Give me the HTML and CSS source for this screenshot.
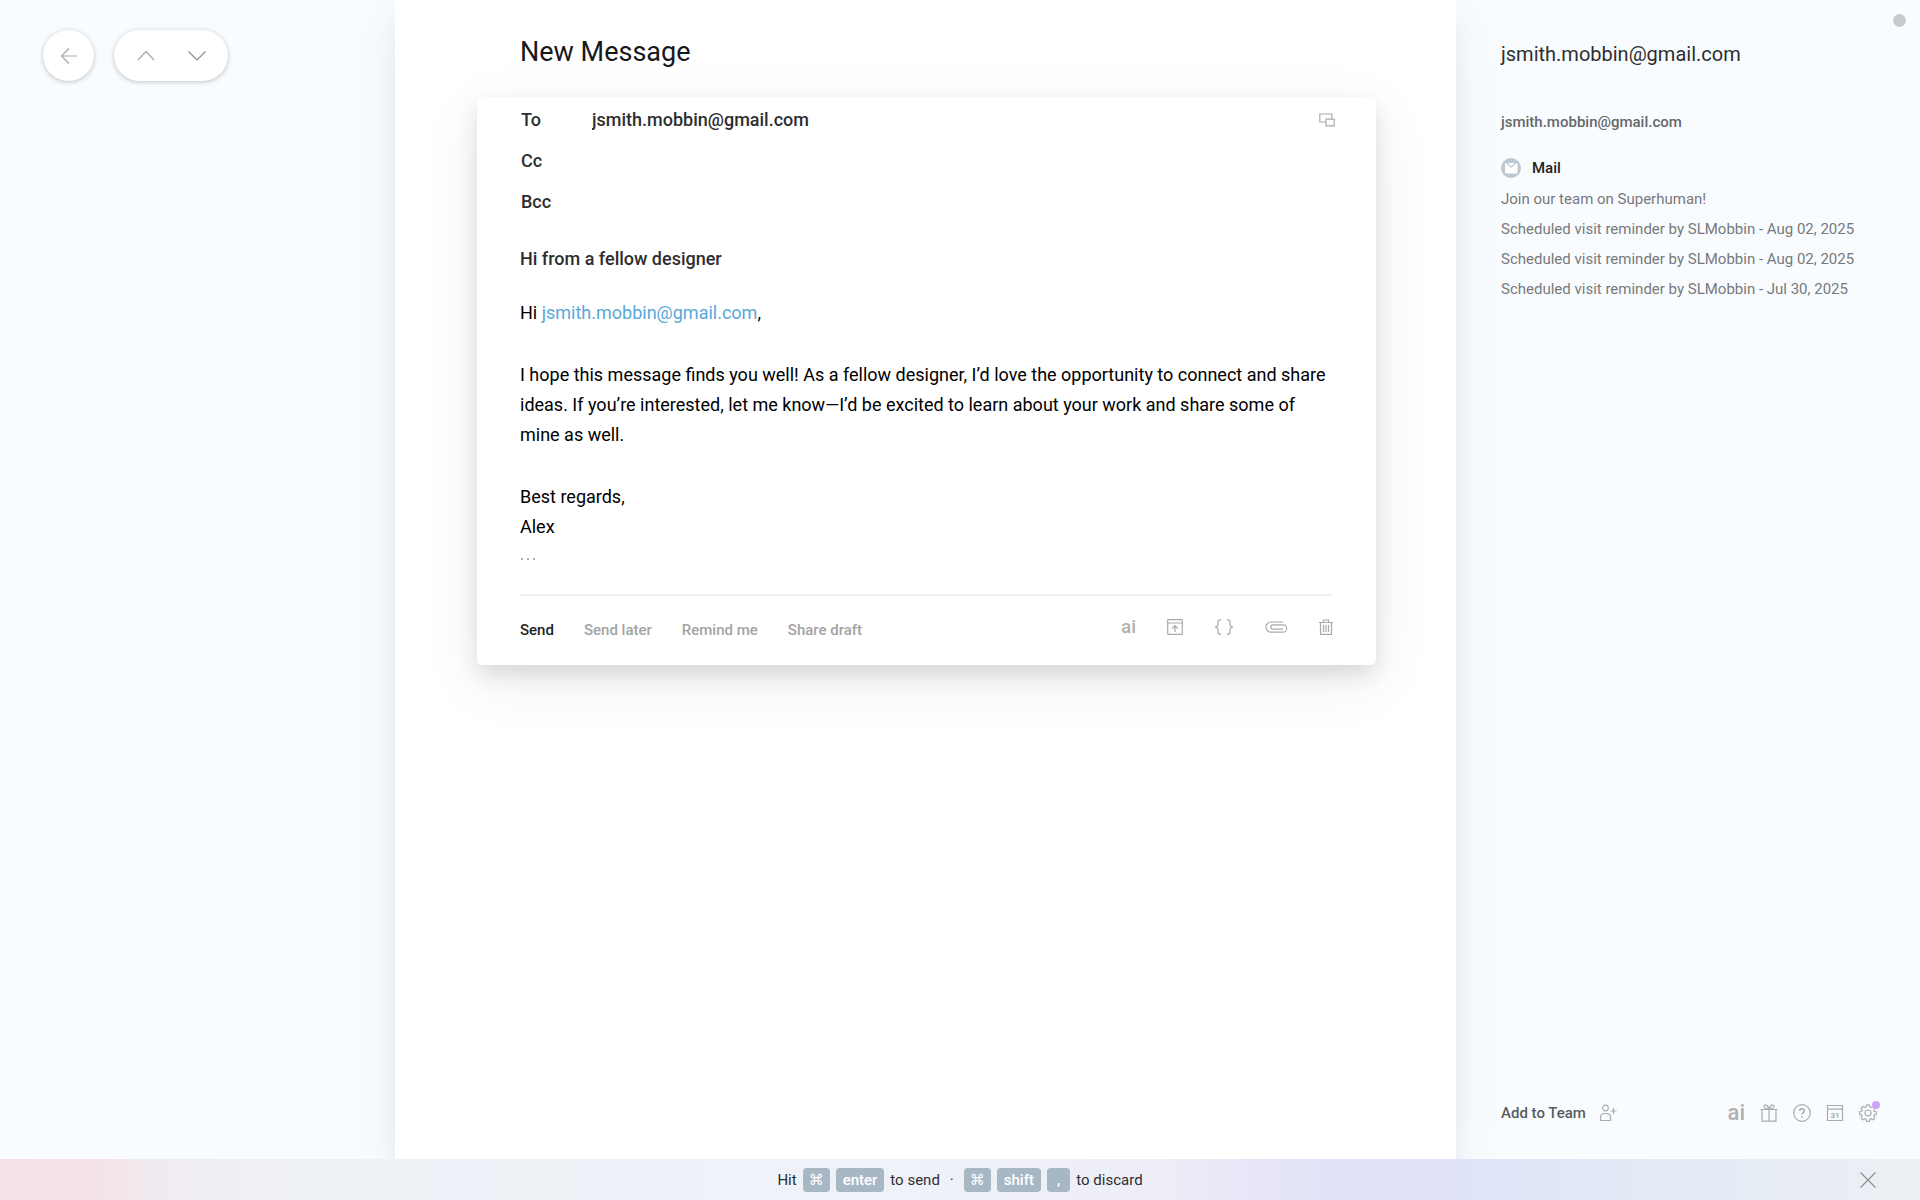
FILE: index.html
```html
<!DOCTYPE html>
<html lang="en">
<head>
  <meta charset="utf-8">
  <meta name="viewport" content="width=device-width, initial-scale=1">
  <title>New Message</title>
  <link rel="stylesheet" href="styles.css">
</head>
<body>
  <div class="workspace">
    <nav class="rail" aria-label="Message navigation">
      <div class="pill">
        <button class="pill-button" type="button" aria-label="Back">
          <svg class="icon" width="18" height="18" viewBox="0 0 18 18"><path d="M17 9H1.500M9 1.500 1.500 9 9 16.500"/></svg>
        </button>
      </div>
      <div class="pill pill-wide">
        <button class="pill-button" type="button" aria-label="Previous">
          <svg class="icon" width="18" height="18" viewBox="0 0 18 18"><path d="M1 13 9 4.500 17 13"/></svg>
        </button>
        <button class="pill-button" type="button" aria-label="Next">
          <svg class="icon icon-strong" width="18" height="18" viewBox="0 0 18 18"><path d="M.500 4.500 9 13 17.500 4.500"/></svg>
        </button>
      </div>
    </nav>

    <main class="page">
      <h1 class="page-title">New Message</h1>
      <form class="composer">
        <div class="recipients">
          <div class="field">
            <label class="field-label" for="to">To</label>
            <input class="field-input" id="to" type="text" value="jsmith.mobbin@gmail.com">
            <button class="icon-button" type="button" aria-label="Pop out">
              <svg class="icon" width="16" height="14" viewBox="0 0 16 14"><path d="M7 9H.800V1h12v5M7 6.200h8.200v6.600H7z"/></svg>
            </button>
          </div>
          <div class="field">
            <label class="field-label" for="cc">Cc</label>
            <input class="field-input" id="cc" type="text">
          </div>
          <div class="field">
            <label class="field-label" for="bcc">Bcc</label>
            <input class="field-input" id="bcc" type="text">
          </div>
        </div>
        <div class="message">
          <input class="subject" type="text" aria-label="Subject" value="Hi from a fellow designer">
          <div class="body" contenteditable="true" role="textbox" aria-multiline="true" aria-label="Message body" spellcheck="false">
            <p>Hi <a class="mention" href="mailto:jsmith.mobbin@gmail.com">jsmith.mobbin@gmail.com</a>,</p>
            <p>I hope this message finds you well! As a fellow designer, I’d love the opportunity to connect and share ideas. If you’re interested, let me know—I’d be excited to learn about your work and share some of mine as well.</p>
            <p>Best regards,<br>Alex</p>
          </div>
          <button class="trim" type="button" aria-label="Show trimmed content"><svg class="dots" width="18" height="4" viewBox="0 0 18 4"><path d="M1 1h2v2H1zM7 1h2v2H7zM13 1h2v2h-2z"/></svg></button>
        </div>
        <div class="actions">
          <button class="action action-primary" type="button">Send</button>
          <button class="action" type="button">Send later</button>
          <button class="action" type="button">Remind me</button>
          <button class="action" type="button">Share draft</button>
          <div class="tools">
            <button class="icon-button ai" type="button">ai</button>
            <button class="icon-button" type="button" aria-label="Scheduling">
              <svg class="icon" width="16" height="16" viewBox="0 0 16 16"><rect x=".7" y=".7" width="14.600" height="14.600" rx=".6"/><path d="M1 4h14M8 13V7M5.200 9.500 8 6.700l2.800 2.800"/></svg>
            </button>
            <button class="icon-button" type="button" aria-label="Snippets">
              <svg class="icon" width="20" height="16" viewBox="0 0 20 16"><path d="M7 .8H6Q4 .8 4 2.800V5.500Q4 7.600 1 8q3 .4 3 2.500v2.700q0 2 2 2h1M13 .8h1q2 0 2 2v2.700Q16 7.600 19 8q-3 .4-3 2.500v2.700q0 2-2 2h-1"/></svg>
            </button>
            <button class="icon-button" type="button" aria-label="Attach file">
              <svg class="icon" width="23" height="12" viewBox="0 0 23 12"><path d="M18 3.800H8a2.200 2.200 0 0 0 0 4.400h10M18 1H6a5 5 0 0 0 0 10.200h12a3.700 3.700 0 0 0 0-7.400"/></svg>
            </button>
            <button class="icon-button" type="button" aria-label="Discard">
              <svg class="icon" width="14" height="16" viewBox="0 0 14 16"><path d="M0 3.500h14M4.500 3.500V1h5v2.500M1.500 3.500v11.800h11V3.500M4.500 6v7M7 6v7M9.500 6v7"/></svg>
            </button>
          </div>
        </div>
      </form>
    </main>

    <aside class="contact">
      <h2 class="contact-name">jsmith.mobbin@gmail.com</h2>
      <p class="contact-email">jsmith.mobbin@gmail.com</p>
      <h3 class="contact-section">
        <svg width="20" height="20" viewBox="0 0 20 20"><circle cx="10" cy="10" r="10" fill="#bcc8d0"/><rect x="4" y="5" width="12.500" height="10.500" rx="1" fill="#fff"/><path d="M5.500 5 10.200 9l4.800-4" fill="none" stroke="#bcc8d0" stroke-width="1.200"/></svg>
        Mail
      </h3>
      <ul class="threads">
        <li><a href="#">Join our team on Superhuman!</a></li>
        <li><a href="#">Scheduled visit reminder by SLMobbin - Aug 02, 2025</a></li>
        <li><a href="#">Scheduled visit reminder by SLMobbin - Aug 02, 2025</a></li>
        <li><a href="#">Scheduled visit reminder by SLMobbin - Jul 30, 2025</a></li>
      </ul>
      <div class="contact-footer">
        <button class="team" type="button">
          Add to Team
          <svg class="icon" width="18" height="18" viewBox="0 0 18 18"><circle cx="6.500" cy="4" r="2.800"/><path d="M1.500 16.500v-3q0-4 4-4h2q4 0 4 4v3zM11.500 7h6M14.500 4v6"/></svg>
        </button>
        <div class="shortcuts">
          <button class="icon-button ai ai-large" type="button">ai</button>
          <button class="icon-button" type="button" aria-label="Refer a friend">
            <svg class="icon" width="18" height="18" viewBox="0 0 18 18"><path d="M.5 5.500h17M2 5.500v11.700h14V5.500M9 5.500v11.700M8.800 5.300C7 5 4 4.500 4 2.600 4 .4 8 0 8.800 5.300M9.200 5.300C11 5 14 4.500 14 2.600 14 .4 10 0 9.200 5.300"/></svg>
          </button>
          <button class="icon-button" type="button" aria-label="Help">
            <svg class="icon" width="18" height="18" viewBox="0 0 18 18"><circle cx="9" cy="9" r="8.300"/><path stroke-width="1.500" d="M6.700 7Q6.700 4.700 9 4.700T11.300 7Q11.300 8 10 8.800T9 10.800M9 12.200v1.500"/></svg>
          </button>
          <button class="icon-button" type="button" aria-label="Calendar">
            <svg class="icon" width="18" height="18" viewBox="0 0 18 18"><path d="M1.500 1.500h15v15h-15zM1.500 5.200h15"/><text class="day" x="9" y="14" text-anchor="middle">31</text></svg>
          </button>
          <button class="icon-button badge-host" type="button" aria-label="Settings">
            <svg class="icon" width="18" height="18" viewBox="0 0 18 18"><circle cx="9" cy="9" r="3"/><path stroke-linejoin="round" d="M7.600.8h2.800l.4 2.100 1.500.6 1.800-1.200 1.900 1.900-1.200 1.800.6 1.500 2.100.4v2.400l-2.100.4-.6 1.500 1.200 1.800-1.900 1.900-1.800-1.200-1.500.6-.4 2.100H7.600l-.4-2.100-1.500-.6-1.800 1.200L2 14l1.200-1.800-.6-1.500-2.100-.4V7.900l2.100-.4L3.200 6 2 4.200l1.900-1.900 1.800 1.200 1.500-.6z"/></svg>
            <span class="badge"></span>
          </button>
        </div>
      </div>
      <span class="status"></span>
    </aside>
  </div>

  <footer class="hints">
    <p class="hint-text">Hit <kbd class="key-symbol">⌘</kbd><kbd>enter</kbd> to send <span class="separator">·</span> <kbd class="key-symbol">⌘</kbd><kbd>shift</kbd><kbd class="key-comma">,</kbd> to discard</p>
    <button class="icon-button close" type="button" aria-label="Close">
      <svg class="icon icon-strong" width="16" height="16" viewBox="0 0 16 16"><path d="M.5.5l15 15M15.500.5l-15 15"/></svg>
    </button>
  </footer>
</body>
</html>
```
FILE: styles.css
```css
*,
*::before,
*::after {
  box-sizing: border-box;
}

body {
  display: flex;
  flex-direction: column;
  min-height: 100vh;
  margin: 0;
  background: #f9fcff;
  color: #2d2e30;
  font: 400 15px/24px Roboto, "Liberation Sans", "DejaVu Sans", sans-serif;
}

h1,
h2,
h3,
p,
ul {
  margin: 0;
  padding: 0;
  font-weight: 400;
}

button,
input {
  margin: 0;
  padding: 0;
  border: 0;
  background: none;
  color: inherit;
  font: inherit;
}

button {
  cursor: pointer;
}

a {
  color: inherit;
  text-decoration: none;
}

.icon {
  display: block;
  fill: none;
  stroke: #a9aaac;
  stroke-width: 1.2;
}

.icon-strong {
  stroke: #8d8e90;
}

.icon-button {
  display: flex;
  align-items: center;
}

.workspace {
  display: grid;
  flex: 1;
  grid-template-columns: 395fr 1061fr 464fr;
}

/* Left rail */

.rail {
  display: flex;
  align-items: flex-start;
  gap: 20px;
  padding: 30px 43px;
}

.pill {
  display: flex;
  border-radius: 26px;
  background: #fff;
  box-shadow: 0 1px 5px rgba(0, 0, 0, 0.24);
}

.pill-wide {
  padding: 0 6px;
}

.pill-button {
  display: grid;
  width: 51px;
  height: 51px;
  place-items: center;
}

/* Composer column */

.page {
  padding: 32px 80px 40px 82px;
  background: #fff;
  box-shadow: 0 20px 20px rgba(40, 50, 70, 0.06), 0 20px 50px rgba(40, 50, 70, 0.06);
}

.page-title {
  padding-left: 43px;
  color: #17181a;
  font-size: 27px;
  line-height: 40px;
}

.composer {
  margin-top: 25px;
  border-radius: 5px;
  background: #fff;
  box-shadow: 0 10px 20px rgba(0, 0, 0, 0.1), 0 16px 60px rgba(0, 0, 0, 0.08);
}

.recipients {
  padding: 2px 41px 0 44px;
}

.field {
  display: flex;
  align-items: center;
  height: 41px;
  font-size: 18px;
  font-weight: 500;
}

.field-label {
  width: 71px;
}

.field-input {
  flex: 1;
  min-width: 0;
}

.message {
  display: flex;
  flex-direction: column;
  margin: 0 44px 0 43px;
  padding: 16px 0 20px;
  border-bottom: 2px solid #f0f0f1;
}

.subject {
  height: 41px;
  font-size: 18px;
  font-weight: 500;
}

.body {
  display: flex;
  flex-direction: column;
  gap: 32px;
  margin-top: 19px;
  color: #000;
  font-size: 18px;
  line-height: 30px;
  outline: 0;
}

.mention {
  color: #58a9d8;
}

.trim {
  display: flex;
  align-items: center;
  height: 32px;
  padding-top: 2px;
}

.dots {
  fill: #b0b0b0;
}

.actions {
  display: flex;
  align-items: center;
  gap: 30px;
  height: 69px;
  padding: 0 43px 2px;
}

.action {
  color: #a3a3a3;
  font-weight: 500;
}

.action-primary {
  color: #222;
}

.tools {
  display: flex;
  align-items: center;
  gap: 31px;
  height: 30px;
  margin-left: auto;
  padding-bottom: 6px;
}

.ai {
  color: #b0b1b3;
  font-size: 19px;
  font-weight: 500;
}

.ai-large {
  font-size: 22px;
}

/* Contact sidebar */

.contact {
  position: relative;
  display: flex;
  flex-direction: column;
  padding: 39px 43px 33px 45px;
}

.contact-name {
  font-size: 20px;
  line-height: 30px;
}

.contact-email {
  margin-top: 41px;
  color: #66686b;
  font-weight: 500;
}

.contact-section {
  display: flex;
  align-items: center;
  gap: 11px;
  margin-top: 22px;
  color: #222;
  font-size: 15px;
  font-weight: 500;
}

.threads {
  margin-top: 4px;
  color: #77797c;
  line-height: 30px;
  list-style: none;
  white-space: nowrap;
}

.contact-footer {
  display: flex;
  align-items: center;
  justify-content: space-between;
  height: 26px;
  margin-top: auto;
}

.team {
  display: flex;
  align-items: center;
  gap: 13px;
  color: #5a5c5f;
  font-weight: 500;
}

.shortcuts {
  display: flex;
  align-items: center;
  gap: 15px;
}

.day {
  fill: #a9aaac;
  stroke: none;
  font-size: 8px;
  font-weight: 700;
}

.badge-host {
  position: relative;
}

.badge {
  position: absolute;
  top: -3px;
  right: -3px;
  width: 8px;
  height: 8px;
  border-radius: 50%;
  background: #cda5f8;
}

.status {
  position: absolute;
  top: 14px;
  right: 14px;
  width: 13px;
  height: 13px;
  border-radius: 50%;
  background: #c8cacf;
}

/* Shortcut hints */

.hints {
  position: relative;
  z-index: 1;
  display: grid;
  grid-template-columns: 1fr auto 1fr;
  align-items: center;
  height: 41px;
  padding: 0 44px;
  background: linear-gradient(90deg, #f4e1e6 0%, #f4e3e9 5%, #f0ebf0 8%, #eef1f6 16%, #eff2f8 47%, #eeedf7 60%, #e1e1f8 70%, #e0e5f8 79%, #e2ebf6 86%, #e8edf5 93%, #edeff3 100%);
}

.hint-text {
  display: flex;
  grid-column: 2;
  align-items: center;
  gap: 6px;
  white-space: nowrap;
}

kbd {
  padding: 0 7px;
  border-radius: 4px;
  background: #a8b7c4;
  color: #fff;
  font: 500 15px/24px Roboto, "DejaVu Sans", sans-serif;
}

.key-symbol {
  padding: 0 6px;
}

.key-comma {
  padding: 0 10px;
}

.separator {
  padding: 0 4px;
}

.close {
  justify-self: end;
}
```
